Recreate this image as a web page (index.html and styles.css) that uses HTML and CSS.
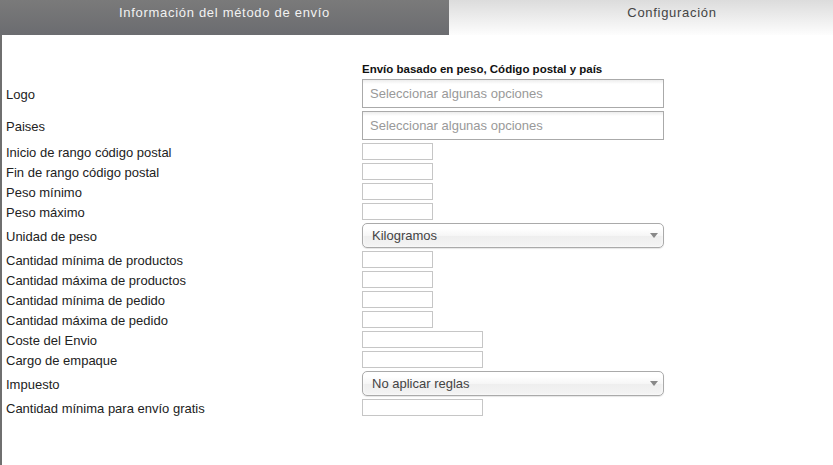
FILE: index.html
```html
<!DOCTYPE html>
<html lang="es">
<head>
<meta charset="utf-8">
<title>Método de envío</title>
<link rel="stylesheet" href="styles.css">
</head>
<body>
<div class="tabs">
  <div class="tab tab-active">Información del método de envío</div>
  <div class="tab tab-inactive">Configuración</div>
</div>
<div class="panel">
  <div class="form">
    <div class="heading">Envío basado en peso, Código postal y país</div>

    <label class="label">Logo</label>
    <div class="multi"><span class="placeholder">Seleccionar algunas opciones</span></div>

    <label class="label">Paises</label>
    <div class="multi"><span class="placeholder">Seleccionar algunas opciones</span></div>

    <label class="label">Inicio de rango código postal</label>
    <input class="input" type="text">

    <label class="label">Fin de rango código postal</label>
    <input class="input" type="text">

    <label class="label">Peso mínimo</label>
    <input class="input" type="text">

    <label class="label">Peso máximo</label>
    <input class="input" type="text">

    <label class="label">Unidad de peso</label>
    <div class="select"><span class="select-text">Kilogramos</span><span class="arrow"></span></div>

    <label class="label">Cantidad mínima de productos</label>
    <input class="input" type="text">

    <label class="label">Cantidad máxima de productos</label>
    <input class="input" type="text">

    <label class="label">Cantidad mínima de pedido</label>
    <input class="input" type="text">

    <label class="label">Cantidad máxima de pedido</label>
    <input class="input" type="text">

    <label class="label">Coste del Envio</label>
    <input class="input input-wide" type="text">

    <label class="label">Cargo de empaque</label>
    <input class="input input-wide" type="text">

    <label class="label">Impuesto</label>
    <div class="select"><span class="select-text">No aplicar reglas</span><span class="arrow"></span></div>

    <label class="label">Cantidad mínima para envío gratis</label>
    <input class="input input-wide" type="text">
  </div>
</div>
</body>
</html>
```

FILE: styles.css
```css
html, body {
  margin: 0;
  padding: 0;
  background: #ffffff;
}

body {
  font-family: "Liberation Sans", Arial, sans-serif;
  font-size: 13px;
  color: #222222;
}

.tabs {
  display: flex;
  height: 35px;
}

.tab {
  box-sizing: border-box;
  height: 35px;
  padding-top: 5px;
  line-height: 16px;
  font-size: 13px;
  letter-spacing: 0.7px;
  text-align: center;
}

.tab-active {
  width: 449px;
  background: linear-gradient(#7a7a7a, #6b6c70);
  color: #f2f2f2;
}

.tab-inactive {
  flex: 1;
  padding-left: 62px;
  background: linear-gradient(#dcdcdc, #fdfdfd);
  color: #444444;
}

.panel {
  box-sizing: border-box;
  min-height: calc(100vh - 35px);
  border-left: 2px solid #6f6f6f;
  padding: 26px 0 0 4px;
}

.form {
  display: grid;
  grid-template-columns: 356px 1fr;
  row-gap: 3px;
  align-items: center;
}

.heading {
  grid-column: 2;
  font-size: 11.5px;
  font-weight: bold;
  line-height: 15px;
  padding-top: 1px;
  margin-bottom: -1px;
  color: #111111;
}

.label {
  grid-column: 1;
  line-height: 15px;
  padding-top: 2px;
  color: #222222;
}

.multi {
  box-sizing: border-box;
  width: 302px;
  height: 29px;
  border: 1px solid #aaaaaa;
  background: linear-gradient(#eeeeee 1%, #ffffff 15%);
  padding-left: 7px;
  display: flex;
  align-items: center;
}

.placeholder {
  color: #999999;
  font-size: 13px;
}

.input {
  box-sizing: border-box;
  width: 71px;
  height: 17px;
  margin: 0;
  border: 1px solid #c6c6c6;
  background: #ffffff;
  padding: 0 3px;
  font: inherit;
}

.input-wide {
  width: 121px;
}

.select {
  box-sizing: border-box;
  width: 302px;
  height: 25px;
  border: 1px solid #aaaaaa;
  border-radius: 5px;
  background: linear-gradient(#ffffff 20%, #f6f6f6 50%, #eeeeee 52%, #f4f4f4 100%);
  box-shadow: inset 0 0 3px #ffffff, 0 1px 1px rgba(0, 0, 0, 0.1);
  padding: 0 4px 0 9px;
  display: flex;
  align-items: center;
  justify-content: space-between;
}

.select-text {
  color: #444444;
  font-size: 13px;
}

.arrow {
  width: 0;
  height: 0;
  border-left: 4px solid transparent;
  border-right: 4px solid transparent;
  border-top: 5px solid #888888;
  margin-right: 1px;
}
```
